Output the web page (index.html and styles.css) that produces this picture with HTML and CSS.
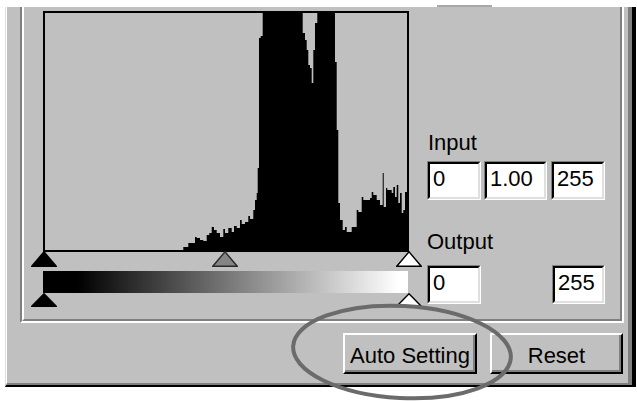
FILE: index.html
```html
<!DOCTYPE html>
<html>
<head>
<meta charset="utf-8">
<link rel="stylesheet" href="styles.css">
</head>
<body>
<div class="top-strip"></div>
<div class="dialog">
  <div class="dialog-inner">
    <div class="group">
      <div class="group-inner">
        <div class="hist-col">
          <svg class="hist" width="366" height="241" viewBox="43 11 366 241">
            <rect x="44" y="12" width="364" height="239" fill="#c0c0c0" stroke="none"/>
            <path fill="#000" d="M45,250 H183.3 V247 H188.3 V243 H195 V237 H196.7 V238 H200 V240 H203.3 V241 H206.7 V235 H209.3 V233 H211.7 V227 H214 V230 H216.7 V233 H220 V237 H223.3 V229 H225 V233 H228.3 V228 H231.7 V232 H234 V226 H236.7 V228 H240 V220 H241.7 V224 H245 V222 H248.3 V216 H250 V219 H253.3 V210 H255 V200 H256.7 V193 H257.7 V168 H259 V38 H260.7 V36 H262.7 V13 H302.7 V33 H305 V40 H306.7 V50 H308.3 V65 H310 V68 H311.7 V83 H313.3 V50 H315 V23 H317.3 V13 H335 V62 H336.7 V130 H338.3 V203 H340 V220 H342.7 V230 H345 V227 H346.7 V232 H351.7 V227 H356.7 V210 H358.3 V212 H361.7 V197 H363.3 V200 H370 V198 H371.7 V192 H373.3 V195 H376.7 V200 H380 V205 H382.7 V173 H383.7 V207 H386 V188 H387.3 V190 H391.7 V193 H393.3 V187 H395 V197 H396.7 V185 H398.3 V203 H400 V193 H401.7 V213 H403.3 V210 H405 V192 H407 V250 Z"/>
            <rect x="44" y="12" width="364" height="239" fill="none" stroke="#000" stroke-width="2"/>
          </svg>
          <div class="track track-top">
            <svg class="thumb thumb-top" style="left:-12px" viewBox="0 0 26 16"><polygon points="13,0.8 25.2,15.2 0.8,15.2" fill="#000" stroke="#000" stroke-width="1.4"/></svg>
            <svg class="thumb thumb-top" style="left:169px" viewBox="0 0 26 16"><polygon points="13,0.8 25.2,15.2 0.8,15.2" fill="#858585" stroke="#2a2a2a" stroke-width="1.4"/></svg>
            <svg class="thumb thumb-top" style="left:353px" viewBox="0 0 26 16"><polygon points="13,0.8 25.2,15.2 0.8,15.2" fill="#fff" stroke="#000" stroke-width="1.4"/></svg>
          </div>
          <div class="gradient"></div>
          <div class="track track-bottom">
            <svg class="thumb thumb-bottom" style="left:-12px" viewBox="0 0 26 14"><polygon points="13,0.8 25.2,13.2 0.8,13.2" fill="#000" stroke="#000" stroke-width="1.4"/></svg>
            <svg class="thumb thumb-bottom" style="left:353px" viewBox="0 0 26 14"><polygon points="13,0.8 25.2,13.2 0.8,13.2" fill="#fff" stroke="#000" stroke-width="1.4"/></svg>
          </div>
        </div>
        <div class="levels">
          <div class="label label-input">Input</div>
          <div class="fields">
            <div class="field f1"><span class="field-box">0</span></div>
            <div class="field f2"><span class="field-box">1.00</span></div>
            <div class="field f3"><span class="field-box">255</span></div>
          </div>
          <div class="label label-output">Output</div>
          <div class="fields fields-out">
            <div class="field f1"><span class="field-box">0</span></div>
            <div class="field f4"><span class="field-box">255</span></div>
          </div>
        </div>
      </div>
    </div>
    <div class="buttons">
      <button class="btn btn-auto">Auto Setting</button>
      <button class="btn btn-reset">Reset</button>
    </div>
  </div>
</div>
<svg class="annotation" width="637" height="401" viewBox="0 0 637 401">
  <ellipse cx="402" cy="352" rx="109" ry="46" transform="rotate(3 402 352)" fill="none" stroke="#6b6b6b" stroke-width="4"/>
</svg>
</body>
</html>
```

FILE: styles.css
```css
html, body {
  margin: 0;
  padding: 0;
}
body {
  width: 637px;
  height: 401px;
  overflow: hidden;
  background: #fff;
  position: relative;
  padding-top: 5px;
  box-sizing: border-box;
  font-family: "Liberation Sans", Arial, sans-serif;
  font-size: 22px;
  color: #000;
}
.top-strip {
  width: 55px;
  height: 2px;
  margin-left: 437px;
  background: #a8a8a8;
}
.dialog {
  box-sizing: border-box;
  margin-left: 5px;
  width: 631px;
  height: 380px;
  background: #c0c0c0;
  border-left: 1px solid #dfdfdf;
  border-right: 4px solid #000;
  border-bottom: 2px solid #000;
}
.dialog-inner {
  box-sizing: border-box;
  height: 100%;
  border-left: 1px solid #fff;
  border-right: 4px solid #808080;
  border-bottom: 2px solid #808080;
}
.group {
  box-sizing: border-box;
  margin-left: 13px;
  width: 604px;
  height: 316px;
  border-left: 2px solid #808080;
  border-right: 2px solid #fff;
  border-bottom: 2px solid #fff;
}
.group-inner {
  box-sizing: border-box;
  height: 100%;
  border-left: 2px solid #fff;
  border-right: 2px solid #808080;
  border-bottom: 2px solid #808080;
  display: flex;
  align-items: flex-start;
}
.hist-col {
  margin-left: 19px;
  width: 366px;
  padding-top: 4px;
}
.hist {
  display: block;
}
.track {
  position: relative;
}
.track-top {
  height: 19px;
}
.track-bottom {
  height: 15px;
}
.thumb {
  position: absolute;
  width: 26px;
  display: block;
}
.thumb-top {
  top: -1px;
  height: 16px;
}
.thumb-bottom {
  top: 0;
  height: 14px;
}
.gradient {
  width: 365px;
  height: 22px;
  background: linear-gradient(to right, #000 0%, #000 9.3%, #fff 97.5%, #fff 100%);
}
.levels {
  margin-left: 18px;
  width: 178px;
  padding-top: 124px;
}
.label {
  height: 24px;
  line-height: 24px;
  white-space: nowrap;
}
.label-input {
  padding-left: 1px;
}
.label-output {
  margin-top: 30px;
}
.fields {
  display: flex;
  margin-top: 6px;
}
.fields-out {
  margin-top: 11px;
  justify-content: space-between;
}
.field {
  box-sizing: border-box;
  height: 39px;
  border-style: solid;
  border-width: 1px;
  border-color: #808080 #fff #fff #808080;
}
.f1 { width: 54px; margin-right: 3px; }
.f2 { width: 63px; margin-right: 4px; }
.f3 { width: 54px; }
.f4 { width: 53px; }
.fields-out .f1 { margin-right: 0; }
.field-box {
  display: block;
  box-sizing: border-box;
  height: 100%;
  background: #fff;
  border-style: solid;
  border-width: 2px;
  border-color: #000 #dfdfdf #dfdfdf #000;
  padding: 3px 0 0 3px;
  line-height: 24px;
  white-space: nowrap;
}
.buttons {
  display: flex;
  justify-content: flex-end;
  gap: 13px;
  margin-top: 10px;
  padding-right: 5px;
}
.btn {
  box-sizing: border-box;
  height: 41px;
  margin: 0;
  padding: 4px 0 0 0;
  font-family: "Liberation Sans", Arial, sans-serif;
  font-size: 22px;
  line-height: 24px;
  color: #000;
  background: #c0c0c0;
  border-style: solid;
  border-width: 2px;
  border-color: #fff #000 #000 #fff;
  box-shadow: inset -2px -2px 0 #808080;
  border-radius: 0;
}
.btn-auto { width: 134px; }
.btn-reset { width: 133px; }
.annotation {
  position: absolute;
  left: 0;
  top: 0;
  pointer-events: none;
}
```
